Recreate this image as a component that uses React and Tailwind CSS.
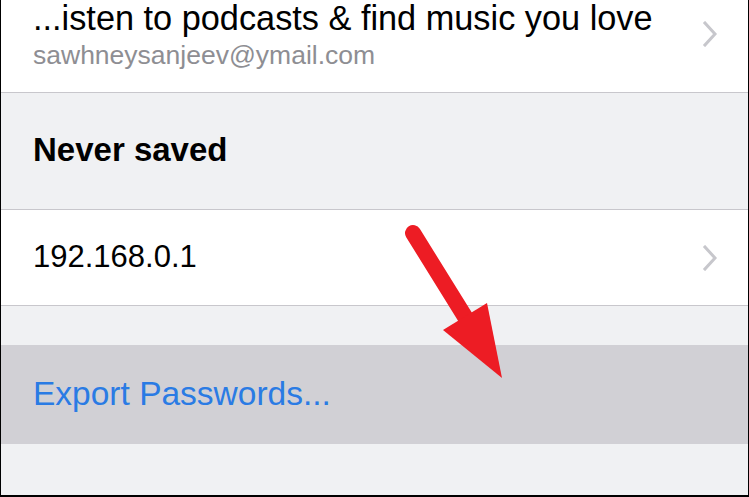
import React from 'react';

const font = { fontFamily: '"Liberation Sans", Arial, sans-serif' };

function Chevron() {
    return (
        <svg width="16" height="26" viewBox="0 0 16 26" className="shrink-0">
            <path d="M3 2 L13 13 L3 24" fill="none" stroke="#c7c7cc" strokeWidth="3" strokeLinecap="square" />
        </svg>
    );
}

export default function App() {
    return (
        <div className="relative w-[749px] h-[497px] overflow-hidden bg-[#f0f1f3] border-l border-r border-b-2 border-black" style={font}>
            {/* account row, cut off at the top */}
            <div className="h-[92px] bg-white flex items-start pl-[32px] pr-[30px]">
                <div className="flex-1 flex flex-col">
                    <div className="text-[34.3px] leading-[36px] text-black whitespace-nowrap">...isten to podcasts &amp; find music you love</div>
                    <div className="mt-[4px] text-[26.5px] leading-[30px] text-[#8e8e93]">sawhneysanjeev@ymail.com</div>
                </div>
                <div className="mt-[21px]"><Chevron /></div>
            </div>
            <div className="h-px bg-[#c8c7cc]" />

            {/* section header */}
            <div className="h-[116px] flex items-center pl-[32px] pb-[2px]">
                <div className="text-[33px] font-bold text-black">Never saved</div>
            </div>
            <div className="h-px bg-[#c8c7cc]" />

            <div className="h-[95px] bg-white flex items-center pl-[32px] pr-[30px]">
                <div className="flex-1 text-[31px] text-black">192.168.0.1</div>
                <Chevron />
            </div>
            <div className="h-px bg-[#c8c7cc]" />

            <div className="h-[39px]" />

            <div className="h-[99px] bg-[#d1d0d5] flex items-center pl-[32px]">
                <div className="text-[33.5px] text-[#2a7be4]">Export Passwords...</div>
            </div>

            {/* red annotation arrow */}
            <svg className="absolute left-0 top-0 pointer-events-none" width="749" height="497">
                <line x1="412" y1="233" x2="466" y2="320" stroke="#ed1c24" strokeWidth="16" strokeLinecap="round" />
                <polygon points="442,330 486,303 501,378" fill="#ed1c24" />
            </svg>
        </div>
    );
}
